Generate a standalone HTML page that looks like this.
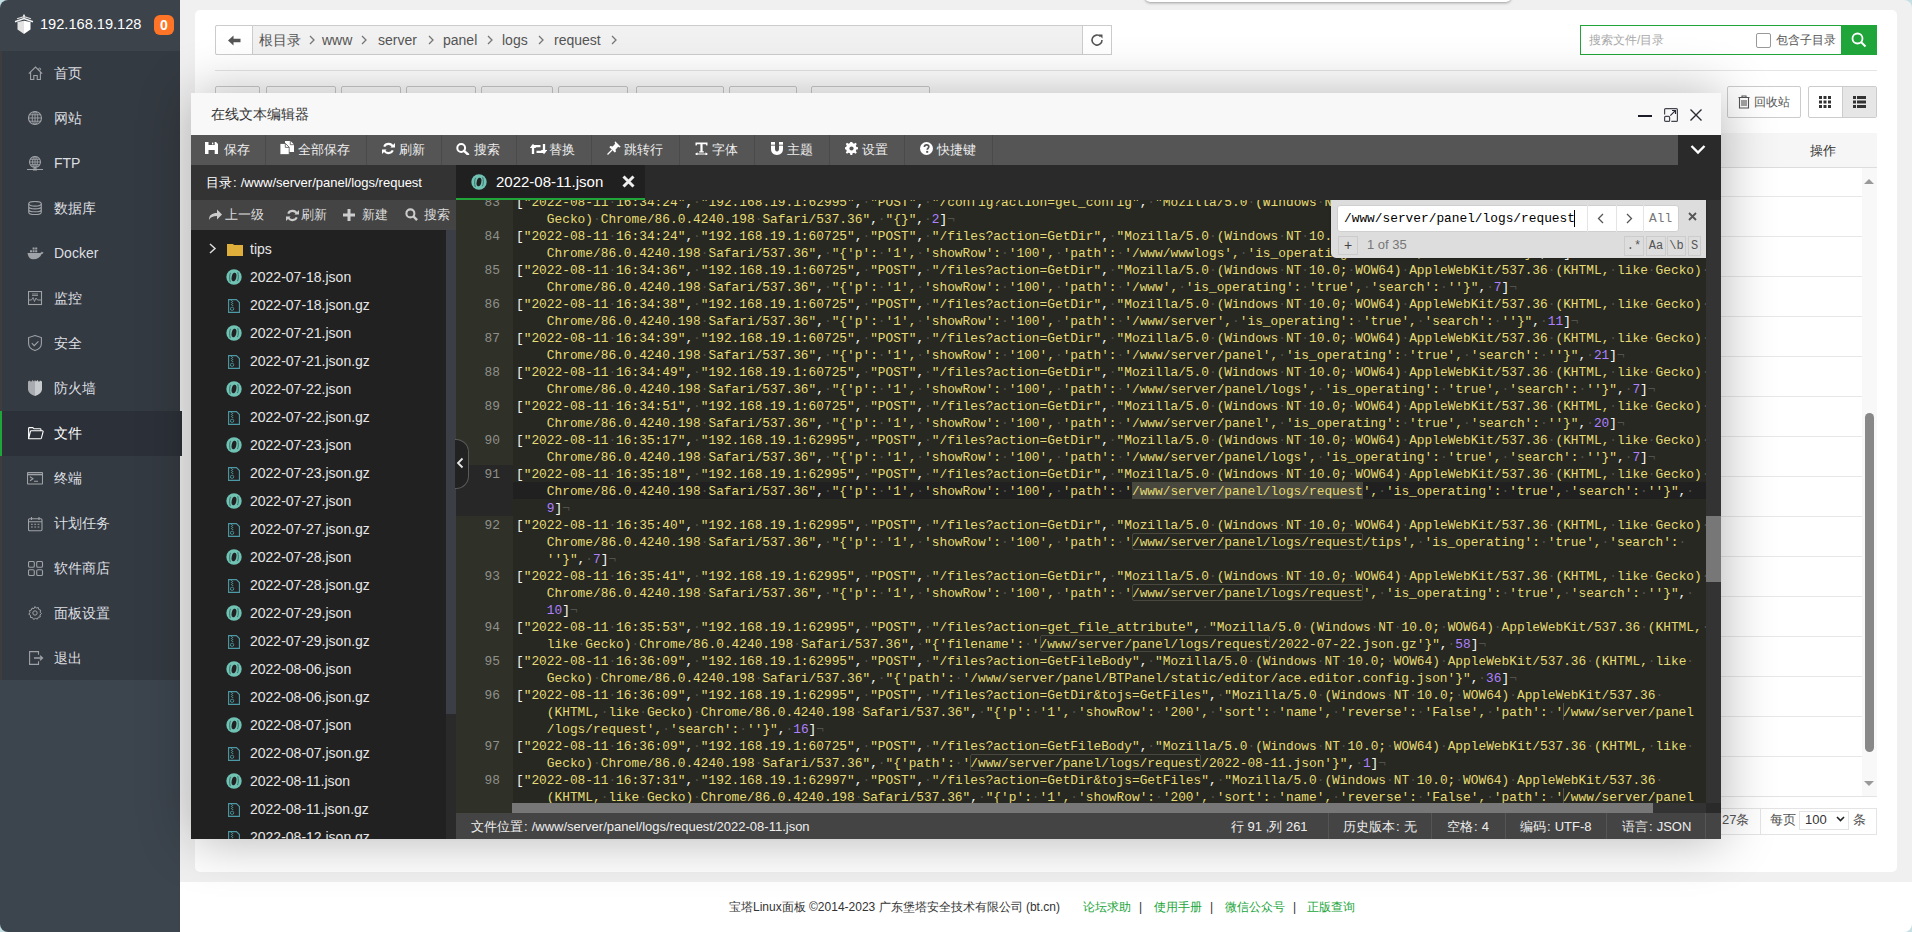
<!DOCTYPE html><html><head><meta charset="utf-8"><style>
*{box-sizing:border-box}
body{margin:0;width:1912px;height:932px;overflow:hidden;background:#f0f0f0;font-family:"Liberation Sans",sans-serif;position:relative;color:#333}
.a{position:absolute}
svg{display:block}
/* sidebar */
#sb{left:0;top:0;width:180px;height:932px;background:#3c444d}
#sbh{left:0;top:0;width:180px;height:51px;background:#3c434b}
#menu{left:0;top:51px;width:180px;height:629px;background:#343a41;border-left:2px solid #3d3d3d}
.mi{position:absolute;left:0;width:180px;height:45px}
.mi .t{position:absolute;left:52px;top:13px;font-size:14px;line-height:18px;color:#dcdfe2;white-space:nowrap}
.mi svg{position:absolute}
.mi.on{background:#2c3038}
.mi.on:before{content:"";position:absolute;left:-2px;top:0;width:2px;height:45px;background:#20a53a}
.mi.on .t{color:#fff}
/* main */
#panel{left:195px;top:10px;width:1702px;height:862px;background:#fff;border-radius:5px}
#foot{left:180px;top:882px;width:1732px;height:50px;background:#fff;font-size:12px;line-height:16px;color:#555;text-align:center;padding-top:18px;padding-left:0}
#foot a{color:#20a53a;text-decoration:none}
.crumb{left:215px;top:25px;width:897px;height:30px;border:1px solid #ccc;background:#f1f1f1;border-radius:2px}
.pbtn{top:86px;height:32px;border:1px solid #ccc;border-radius:2px;background:#fff}
/* dialog */
#dlg{left:191px;top:93px;width:1530px;height:746px;background:#2a2a2a;box-shadow:1px 1px 50px rgba(0,0,0,.3)}
#dtitle{left:0;top:0;width:1530px;height:42px;background:#f8f8f8;font-size:14px;line-height:42px;padding-left:20px;color:#333}
#tb{left:0;top:42px;width:1487px;height:30px;background:#555}
.tbi{position:absolute;top:0;height:30px;border-right:1px solid #4a4a4a;color:#eee;font-size:13px;line-height:30px;white-space:nowrap}
.tbi svg{position:absolute;top:8px}
.tbi span{position:absolute;top:0}
#dirh{left:0;top:72px;width:265px;height:35px;background:#333;color:#fff;font-size:13px;line-height:35px;padding-left:15px;white-space:nowrap}
#dirt{left:0;top:107px;width:265px;height:30px;background:#444;color:#ddd;font-size:13px;line-height:30px;white-space:nowrap}
#tree{left:0;top:137px;width:255px;height:609px;background:#212121;overflow:hidden}
#treesb{left:255px;top:137px;width:10px;height:609px;background:#2a2a2a}
.fi{position:absolute;left:0;height:28px;width:255px;color:#e6e6e6;font-size:14px;line-height:28px;white-space:nowrap}
.fi span{position:absolute;left:59px;top:0}
.fi svg{position:absolute}
#tabs{left:265px;top:72px;width:1265px;height:35px;background:#2a2a2a}
#tab{left:0;top:0;width:189px;height:35px;background:#202020;border-bottom:2px solid #20a53a;color:#fff;font-size:15px;line-height:34px;white-space:nowrap}
#ed{left:265px;top:107px;width:1265px;height:613px;background:#272822;overflow:hidden}
#gut{left:0;top:0;width:57px;height:613px;background:#2f3129}
.ln{position:absolute;left:0;width:57px;height:17px;text-align:right;padding-right:13px;color:#8f908a;font-family:"Liberation Mono",monospace;font-size:12.83px;line-height:17px}
.row{position:absolute;left:61px;height:17px;white-space:pre;font-family:"Liberation Mono",monospace;font-size:12.83px;line-height:17px;color:#f8f8f2}
.s{color:#e6db74}.n{color:#ae81ff}.i{color:#52524d}
#status{left:265px;top:720px;width:1265px;height:26px;background:#444;color:#eee;font-size:13px;line-height:28px;white-space:nowrap}
.st{position:absolute;top:0;height:26px;border-left:1px solid #555}
</style></head><body><div class="a" id="sb"></div><div class="a" id="sbh"><svg class="a" style="left:14px;top:14px" width="20" height="21" viewBox="0 0 20 21"><path d="M3.5 8L10 6.8V20L3.5 15.5Z" fill="#e2e2e2"/><path d="M10 6.8L16.5 8V15.5L10 20Z" fill="#fff"/><path d="M1 7.8L10 4.6L19 7.8" fill="none" stroke="#f2f2f2" stroke-width="1.5"/><path d="M3 4.8L10 2.6L17 4.8" fill="none" stroke="#d8d8d8" stroke-width="1.2"/><rect x="9" y="0.6" width="2" height="3" fill="#ddd"/></svg><div class="a" style="left:40px;top:15px;font-size:14.6px;line-height:18px;color:#fff;white-space:nowrap">192.168.19.128</div><div class="a" style="left:154px;top:15px;width:20px;height:20px;background:#ff7426;border-radius:6px;color:#fff;font-size:14px;font-weight:bold;line-height:20px;text-align:center">0</div></div><div class="a" id="menu"><div class="mi" style="top:0px"><svg style="left:26px;top:15px" width="16" height="15" viewBox="0 0 16 15" ><path d="M0.8 7.6L7.5 1L14.2 7.6M2.6 6V13.5H5.8V9.5H9.2V13.5H12.4V6" fill="none" stroke="#9fa3a8" stroke-width="1.1"/><circle cx="11.6" cy="3.2" r="1.1" fill="none" stroke="#9fa3a8" stroke-width="0.9"/></svg><div class="t">首页</div></div><div class="mi" style="top:45px"><svg style="left:26px;top:15px" width="15" height="15" viewBox="0 0 15 15" ><circle cx="7" cy="7" r="6.5" fill="none" stroke="#9fa3a8" stroke-width="1.1"/><ellipse cx="7" cy="7" rx="2.8" ry="6.5" fill="none" stroke="#9fa3a8" stroke-width="0.9"/><path d="M0.5 7H13.5M1.5 3.8H12.5M1.5 10.2H12.5M7 0.5V13.5" stroke="#9fa3a8" stroke-width="0.9"/></svg><div class="t">网站</div></div><div class="mi" style="top:90px"><svg style="left:25px;top:15px" width="17" height="15" viewBox="0 0 17 15" ><circle cx="8" cy="6" r="5.5" fill="none" stroke="#9fa3a8" stroke-width="1.1"/><ellipse cx="8" cy="6" rx="2.4" ry="5.5" fill="none" stroke="#9fa3a8" stroke-width="0.9"/><path d="M2.5 6H13.5M3.3 3.3H12.7M3.3 8.7H12.7M8 0.5V11.5" stroke="#9fa3a8" stroke-width="0.9"/><path d="M0 13.5H16M8 11.5V13.5" stroke="#9fa3a8" stroke-width="1.2"/><rect x="6" y="12.5" width="4" height="2" fill="#9fa3a8"/></svg><div class="t">FTP</div></div><div class="mi" style="top:135px"><svg style="left:26px;top:15px" width="15" height="15" viewBox="0 0 15 15" ><ellipse cx="7" cy="2.8" rx="6.3" ry="2.3" fill="none" stroke="#9fa3a8" stroke-width="1.1"/><path d="M0.7 2.8V11.2C0.7 12.5 3.5 13.5 7 13.5S13.3 12.5 13.3 11.2V2.8M0.7 5.6C0.7 6.9 3.5 7.9 7 7.9S13.3 6.9 13.3 5.6M0.7 8.4C0.7 9.7 3.5 10.7 7 10.7S13.3 9.7 13.3 8.4" fill="none" stroke="#9fa3a8" stroke-width="1.1"/></svg><div class="t">数据库</div></div><div class="mi" style="top:180px"><svg style="left:25px;top:16px" width="17" height="13" viewBox="0 0 17 13" ><path d="M0.5 6H13C13.8 6 14.6 5.4 14.9 4.6C15.4 5.3 16 5.6 16.6 5.5C16 6.8 15.2 7 14.6 7C13.4 10.2 10.6 12.3 6.3 12.3C3 12.3 1 10 0.5 6Z" fill="#9fa3a8"/><path d="M3 3.2h2v2H3zM5.6 3.2h2v2h-2zM8.2 3.2h2v2h-2zM5.6 0.6h2v2h-2zM8.2 0.6h2v2h-2z" fill="#9fa3a8"/></svg><div class="t">Docker</div></div><div class="mi" style="top:225px"><svg style="left:26px;top:15px" width="15" height="15" viewBox="0 0 15 15" ><rect x="0.5" y="0.5" width="13" height="13" fill="none" stroke="#9fa3a8" stroke-width="1.1"/><path d="M1 9L3.5 9L5 6.5L6.5 10.5L8 7L9.5 9L13 9" fill="none" stroke="#9fa3a8" stroke-width="0.9"/><path d="M4 3H10M4 4.5H10" stroke="#9fa3a8" stroke-width="0.8"/></svg><div class="t">监控</div></div><div class="mi" style="top:270px"><svg style="left:26px;top:14px" width="15" height="17" viewBox="0 0 15 17" ><path d="M7 0.6L13.4 2.6V8.5C13.4 12 10.5 14.5 7 15.6C3.5 14.5 0.6 12 0.6 8.5V2.6Z" fill="none" stroke="#9fa3a8" stroke-width="1.1"/><path d="M3.8 8.2L6.2 10.6L10.4 6.3" fill="none" stroke="#9fa3a8" stroke-width="1.1"/></svg><div class="t">安全</div></div><div class="mi" style="top:315px"><svg style="left:26px;top:14px" width="15" height="17" viewBox="0 0 15 17" ><path d="M0 1.5L2 0.5L3 2L4.5 0L6 1.5L7 0V16C3.5 15 0 12.5 0 9Z" fill="#a8acb0"/><path d="M7 0L8 1.5L9.5 0L11 2L12 0.5L14 1.5V9C14 12.5 10.5 15 7 16Z" fill="#c8cbce"/></svg><div class="t">防火墙</div></div><div class="mi on" style="top:360px"><svg style="left:26px;top:16px" width="16" height="13" viewBox="0 0 16 13" ><path d="M0.6 11.6V1.4C0.6 0.9 0.9 0.6 1.4 0.6H4.8L6 1.8H12.2C12.6 1.8 12.9 2.1 12.9 2.5V3.8M0.6 11.6L2.4 4.5C2.5 4.1 2.8 3.8 3.2 3.8H14.4C14.9 3.8 15.2 4.2 15.1 4.6L13.4 11.2C13.3 11.5 13 11.7 12.6 11.7H0.8Z" fill="none" stroke="#fff" stroke-width="1.1"/></svg><div class="t">文件</div></div><div class="mi" style="top:405px"><svg style="left:25px;top:16px" width="16" height="13" viewBox="0 0 16 13" ><rect x="0.5" y="0.5" width="15" height="11.5" rx="0.8" fill="none" stroke="#9fa3a8" stroke-width="1.1"/><path d="M0.5 2.5H15.5" stroke="#9fa3a8" stroke-width="1.6"/><path d="M3 4.8L6 6.8L3 8.8M7 9.3H11" fill="none" stroke="#9fa3a8" stroke-width="1.1"/></svg><div class="t">终端</div></div><div class="mi" style="top:450px"><svg style="left:26px;top:16px" width="15" height="15" viewBox="0 0 15 15" ><rect x="0.5" y="1.8" width="13.5" height="12" rx="1.2" fill="none" stroke="#9fa3a8" stroke-width="1.1"/><path d="M0.5 4.8H14M3.5 0V3M11 0V3" stroke="#9fa3a8" stroke-width="1.1"/><path d="M3 7.3H4.8M6.3 7.3H8.1M9.6 7.3H11.4M3 10H4.8M6.3 10H8.1M9.6 10H11.4" stroke="#9fa3a8" stroke-width="1"/></svg><div class="t">计划任务</div></div><div class="mi" style="top:495px"><svg style="left:26px;top:15px" width="16" height="16" viewBox="0 0 16 16" ><rect x="0.5" y="0.5" width="5.8" height="5.8" rx="1.3" fill="none" stroke="#9fa3a8" stroke-width="1.1"/><rect x="8.7" y="0.5" width="5.8" height="5.8" rx="1.3" fill="none" stroke="#9fa3a8" stroke-width="1.1"/><rect x="0.5" y="8.7" width="5.8" height="5.8" rx="1.3" fill="none" stroke="#9fa3a8" stroke-width="1.1"/><rect x="8.7" y="8.7" width="5.8" height="5.8" rx="1.3" fill="none" stroke="#9fa3a8" stroke-width="1.1"/></svg><div class="t">软件商店</div></div><div class="mi" style="top:540px"><svg style="left:26px;top:15px" width="15" height="15" viewBox="0 0 15 15" ><circle cx="7" cy="7" r="2.2" fill="none" stroke="#9fa3a8" stroke-width="1"/><path d="M7 0.5L8.3 2.1L10.3 1.5L10.8 3.5L12.7 4.2L12.1 6.2L13.5 7.6L11.9 8.9L12.3 10.9L10.3 11.2L9.4 13.1L7.5 12.4L5.6 13.4L4.5 11.6L2.5 11.5L2.6 9.4L0.8 8.3L2 6.6L1.4 4.6L3.4 4.1L4 2.1L6 2.6Z" fill="none" stroke="#9fa3a8" stroke-width="1" stroke-linejoin="round"/></svg><div class="t">面板设置</div></div><div class="mi" style="top:585px"><svg style="left:27px;top:15px" width="15" height="15" viewBox="0 0 15 15" ><path d="M9.5 3.8V0.6H0.6V13.4H9.5V10.2" fill="none" stroke="#9fa3a8" stroke-width="1.1"/><path d="M5 7H13.5M11 4.6L13.5 7L11 9.4" fill="none" stroke="#9fa3a8" stroke-width="1.3"/></svg><div class="t">退出</div></div></div><div class="a" id="panel"></div><div class="a crumb"></div><div class="a" style="left:215px;top:25px;width:38px;height:30px;border:1px solid #ccc;background:#fff;border-radius:2px 0 0 2px"></div><svg class="a" style="left:228px;top:35px" width="13" height="11" viewBox="0 0 13 11"><path d="M0 5.5L5.5 0.5V3.8H12.5V7.2H5.5V10.5Z" fill="#555"/></svg><div class="a" style="left:259px;top:32px;font-size:14px;line-height:16px;color:#555;white-space:nowrap">根目录</div><div class="a" style="left:322px;top:32px;font-size:14px;line-height:16px;color:#555;white-space:nowrap">www</div><div class="a" style="left:378px;top:32px;font-size:14px;line-height:16px;color:#555;white-space:nowrap">server</div><div class="a" style="left:443px;top:32px;font-size:14px;line-height:16px;color:#555;white-space:nowrap">panel</div><div class="a" style="left:502px;top:32px;font-size:14px;line-height:16px;color:#555;white-space:nowrap">logs</div><div class="a" style="left:554px;top:32px;font-size:14px;line-height:16px;color:#555;white-space:nowrap">request</div><svg class="a" style="left:309px;top:35px" width="6" height="10" viewBox="0 0 6 10"><path d="M1 1L5 5L1 9" fill="none" stroke="#777" stroke-width="1.3"/></svg><svg class="a" style="left:361px;top:35px" width="6" height="10" viewBox="0 0 6 10"><path d="M1 1L5 5L1 9" fill="none" stroke="#777" stroke-width="1.3"/></svg><svg class="a" style="left:428px;top:35px" width="6" height="10" viewBox="0 0 6 10"><path d="M1 1L5 5L1 9" fill="none" stroke="#777" stroke-width="1.3"/></svg><svg class="a" style="left:487px;top:35px" width="6" height="10" viewBox="0 0 6 10"><path d="M1 1L5 5L1 9" fill="none" stroke="#777" stroke-width="1.3"/></svg><svg class="a" style="left:538px;top:35px" width="6" height="10" viewBox="0 0 6 10"><path d="M1 1L5 5L1 9" fill="none" stroke="#777" stroke-width="1.3"/></svg><svg class="a" style="left:611px;top:35px" width="6" height="10" viewBox="0 0 6 10"><path d="M1 1L5 5L1 9" fill="none" stroke="#777" stroke-width="1.3"/></svg><div class="a" style="left:1082px;top:25px;width:30px;height:30px;border:1px solid #ccc;background:#fff"></div><svg class="a" style="left:1089px;top:32px" width="16" height="16" viewBox="0 0 16 16"><path d="M13 8A5 5 0 1 1 11.5 4.5" fill="none" stroke="#555" stroke-width="1.6"/><path d="M9.5 2.5L13.5 2.5L13.5 6.5Z" fill="#555"/></svg><div class="a" style="left:1580px;top:25px;width:262px;height:30px;border:1px solid #20a53a;background:#fff"></div><div class="a" style="left:1589px;top:32px;font-size:12px;line-height:16px;color:#aaa;white-space:nowrap">搜索文件/目录</div><div class="a" style="left:1756px;top:33px;width:15px;height:15px;border:1px solid #999;border-radius:2px;background:#fff"></div><div class="a" style="left:1776px;top:32px;font-size:12px;line-height:16px;color:#555;white-space:nowrap">包含子目录</div><div class="a" style="left:1841px;top:25px;width:36px;height:30px;background:#20a53a"></div><svg class="a" style="left:1851px;top:32px" width="16" height="16" viewBox="0 0 16 16"><circle cx="6.5" cy="6.5" r="5" fill="none" stroke="#fff" stroke-width="1.8"/><path d="M10 10L14.5 14.5" stroke="#fff" stroke-width="2"/></svg><div class="a" style="left:215px;top:70px;width:1662px;height:1px;background:#e4e4e4"></div><div class="a pbtn" style="left:215px;width:45px"></div><div class="a pbtn" style="left:266px;width:70px"></div><div class="a pbtn" style="left:341px;width:60px"></div><div class="a pbtn" style="left:406px;width:70px"></div><div class="a pbtn" style="left:481px;width:72px"></div><div class="a pbtn" style="left:558px;width:70px"></div><div class="a pbtn" style="left:636px;width:88px"></div><div class="a pbtn" style="left:729px;width:68px"></div><div class="a pbtn" style="left:811px;width:119px"></div><div class="a" style="left:803px;top:93px;width:1px;height:10px;background:#ddd"></div><div class="a pbtn" style="left:1727px;width:74px;top:86px;height:32px"></div><svg class="a" style="left:1738px;top:95px" width="12" height="14" viewBox="0 0 12 14"><path d="M0.5 2.5H11.5M4 2.5V1H8V2.5M1.5 3V13H10.5V3M4 5V11M6 5V11M8 5V11" fill="none" stroke="#555" stroke-width="1.1"/></svg><div class="a" style="left:1754px;top:94px;font-size:12px;line-height:16px;color:#555;white-space:nowrap">回收站</div><div class="a pbtn" style="left:1808px;width:69px;top:86px;height:32px"></div><div class="a" style="left:1842px;top:87px;width:34px;height:30px;background:#e6e6e6;border-left:1px solid #ccc"></div><svg class="a" style="left:1819px;top:96px" width="12" height="12" viewBox="0 0 12 12"><path d="M0 0h3v3H0zM4.5 0h3v3h-3zM9 0h3v3H9zM0 4.5h3v3H0zM4.5 4.5h3v3h-3zM9 4.5h3v3H9zM0 9h3v3H0zM4.5 9h3v3h-3zM9 9h3v3H9z" fill="#333"/></svg><svg class="a" style="left:1853px;top:96px" width="13" height="12" viewBox="0 0 13 12"><path d="M0 0h3v3H0zM4 0h9v3H4zM0 4.5h3v3H0zM4 4.5h9v3H4zM0 9h3v3H0zM4 9h9v3H4z" fill="#333"/></svg><div class="a" style="left:1721px;top:133px;width:156px;height:35px;background:#f6f6f6;border-bottom:1px solid #ddd"></div><div class="a" style="left:1810px;top:143px;font-size:13px;line-height:16px;color:#333">操作</div><div class="a" style="left:1721px;top:196px;width:141px;height:1px;background:#e8e8e8"></div><div class="a" style="left:1721px;top:236px;width:141px;height:1px;background:#e8e8e8"></div><div class="a" style="left:1721px;top:276px;width:141px;height:1px;background:#e8e8e8"></div><div class="a" style="left:1721px;top:316px;width:141px;height:1px;background:#e8e8e8"></div><div class="a" style="left:1721px;top:356px;width:141px;height:1px;background:#e8e8e8"></div><div class="a" style="left:1721px;top:396px;width:141px;height:1px;background:#e8e8e8"></div><div class="a" style="left:1721px;top:436px;width:141px;height:1px;background:#e8e8e8"></div><div class="a" style="left:1721px;top:476px;width:141px;height:1px;background:#e8e8e8"></div><div class="a" style="left:1721px;top:516px;width:141px;height:1px;background:#e8e8e8"></div><div class="a" style="left:1721px;top:556px;width:141px;height:1px;background:#e8e8e8"></div><div class="a" style="left:1721px;top:596px;width:141px;height:1px;background:#e8e8e8"></div><div class="a" style="left:1721px;top:636px;width:141px;height:1px;background:#e8e8e8"></div><div class="a" style="left:1721px;top:676px;width:141px;height:1px;background:#e8e8e8"></div><div class="a" style="left:1721px;top:716px;width:141px;height:1px;background:#e8e8e8"></div><div class="a" style="left:1721px;top:756px;width:141px;height:1px;background:#e8e8e8"></div><div class="a" style="left:1721px;top:796px;width:141px;height:1px;background:#e8e8e8"></div><div class="a" style="left:1862px;top:168px;width:15px;height:628px;background:#f8f8f8"></div><svg class="a" style="left:1864px;top:178px" width="10" height="6" viewBox="0 0 10 6"><path d="M0 6L5 1L10 6Z" fill="#999"/></svg><svg class="a" style="left:1864px;top:781px" width="10" height="6" viewBox="0 0 10 6"><path d="M0 0L5 5L10 0Z" fill="#999"/></svg><div class="a" style="left:1865px;top:413px;width:9px;height:339px;background:#888;border-radius:5px"></div><div class="a" style="left:1721px;top:796px;width:156px;height:1px;background:#e4e4e4"></div><div class="a" style="left:1721px;top:808px;width:156px;height:27px;border:1px solid #e4e4e4;border-left:none;background:#fff"></div><div class="a" style="left:1760px;top:808px;width:1px;height:27px;background:#e4e4e4"></div><div class="a" style="left:1722px;top:812px;font-size:13px;line-height:16px;color:#555;white-space:nowrap">27条</div><div class="a" style="left:1770px;top:812px;font-size:13px;line-height:16px;color:#555;white-space:nowrap">每页</div><div class="a" style="left:1799px;top:811px;width:50px;height:19px;border:1px solid #e4e4e4;background:#fff"></div><div class="a" style="left:1805px;top:812px;font-size:13px;line-height:16px;color:#333">100</div><svg class="a" style="left:1836px;top:816px" width="9" height="6" viewBox="0 0 9 6"><path d="M1 1L4.5 4.5L8 1" fill="none" stroke="#222" stroke-width="1.6"/></svg><div class="a" style="left:1853px;top:812px;font-size:13px;line-height:16px;color:#555">条</div><div class="a" style="left:180px;top:882px;width:1732px;height:50px;background:#fff"></div><div class="a" style="left:729px;top:899px;font-size:12px;line-height:16px;color:#333;white-space:nowrap">宝塔Linux面板 ©2014-2023 广东堡塔安全技术有限公司 (bt.cn)</div><div class="a" style="left:1083px;top:899px;font-size:12px;line-height:16px;color:#20a53a;white-space:nowrap">论坛求助</div><div class="a" style="left:1139px;top:899px;font-size:12px;line-height:16px;color:#333;white-space:nowrap">|</div><div class="a" style="left:1154px;top:899px;font-size:12px;line-height:16px;color:#20a53a;white-space:nowrap">使用手册</div><div class="a" style="left:1210px;top:899px;font-size:12px;line-height:16px;color:#333;white-space:nowrap">|</div><div class="a" style="left:1225px;top:899px;font-size:12px;line-height:16px;color:#20a53a;white-space:nowrap">微信公众号</div><div class="a" style="left:1293px;top:899px;font-size:12px;line-height:16px;color:#333;white-space:nowrap">|</div><div class="a" style="left:1307px;top:899px;font-size:12px;line-height:16px;color:#20a53a;white-space:nowrap">正版查询</div><div class="a" style="left:1145px;top:-10px;width:366px;height:12px;background:#fff;border-radius:5px;box-shadow:0 1px 3px rgba(0,0,0,.35)"></div><div class="a" id="dlg"><div class="a" id="dtitle">在线文本编辑器</div><svg class="a" style="left:1447px;top:22px" width="14" height="2"><rect width="14" height="2" fill="#1c1c28"/></svg><svg class="a" style="left:1473px;top:15px" width="14" height="14" viewBox="0 0 14 14"><path d="M0.6 6.5V1.6C0.6 1 1 0.6 1.6 0.6H12.4C13 0.6 13.4 1 13.4 1.6V12.4C13.4 13 13 13.4 12.4 13.4H7.3" fill="none" stroke="#45454d" stroke-width="1.2"/><rect x="0.6" y="8.4" width="5" height="5" rx="1" fill="none" stroke="#45454d" stroke-width="1.2"/><path d="M6.3 7.7L11.3 2.7M8 2.5H11.5V6" fill="none" stroke="#2a2a35" stroke-width="1.2"/></svg><svg class="a" style="left:1499px;top:16px" width="12" height="12" viewBox="0 0 12 12"><path d="M0.5 0.5L11.5 11.5M11.5 0.5L0.5 11.5" stroke="#2a2a33" stroke-width="1.4"/></svg><div class="a" id="tb"><div class="tbi" style="left:0px;width:75px"><svg style="left:14px;top:7px" width="13" height="12" viewBox="0 0 13 12" ><path d="M0 0H3.5V3H9.7V0H11L13 2V12H9.7V8H3.5V12H0Z" fill="#fff"/><rect x="7" y="0.6" width="1.3" height="1.8" fill="#fff"/></svg><span style="left:33px">保存</span></div><div class="tbi" style="left:74px;width:102px"><svg style="left:15px;top:6px" width="14" height="14" viewBox="0 0 14 14" ><path d="M5 0H10.5L14 3.5V11H5Z" fill="#fff"/><path d="M10.3 0V3.7H14" fill="none" stroke="#555" stroke-width="0.8"/><path d="M0 2.5H5.5L9.2 6.2V13.6H0Z" fill="#fff" stroke="#555" stroke-width="0.8"/><path d="M5.3 2.5V6.4H9.2" fill="none" stroke="#555" stroke-width="0.8"/></svg><span style="left:33px">全部保存</span></div><div class="tbi" style="left:175px;width:76px"><svg style="left:16px;top:7px" width="13" height="13" viewBox="0 0 13 13" ><path d="M11 5A4.8 4.8 0 0 0 2.2 4.6" fill="none" stroke="#fff" stroke-width="2.1"/><path d="M8.4 5.6H13V1Z" fill="#fff"/><path d="M2 8A4.8 4.8 0 0 0 10.8 8.4" fill="none" stroke="#fff" stroke-width="2.1"/><path d="M4.6 7.4H0V12Z" fill="#fff"/></svg><span style="left:33px">刷新</span></div><div class="tbi" style="left:250px;width:76px"><svg style="left:15px;top:8px" width="14" height="12" viewBox="0 0 14 12" ><circle cx="5.2" cy="5" r="3.9" fill="none" stroke="#fff" stroke-width="2"/><path d="M8 7.8L12 11.5" stroke="#fff" stroke-width="2.4" stroke-linecap="round"/></svg><span style="left:33px">搜索</span></div><div class="tbi" style="left:325px;width:76px"><svg style="left:14px;top:8px" width="17" height="12" viewBox="0 0 17 12" ><path d="M3 11V3.2H10.5" fill="none" stroke="#fff" stroke-width="2.3"/><path d="M-0.2 5L3 0.8L6.2 5Z" fill="#fff"/><path d="M14 1V8.8H6.5" fill="none" stroke="#fff" stroke-width="2.3"/><path d="M10.8 7L14 11.2L17.2 7Z" fill="#fff"/></svg><span style="left:33px">替换</span></div><div class="tbi" style="left:400px;width:89px"><svg style="left:16px;top:6px" width="14" height="14" viewBox="0 0 14 14" ><path d="M8.2 0.3L13.7 5.8L12.6 6.4L11.2 5.8L8.6 8.4L8.9 10.7L7.7 11.6L2.4 6.3L3.3 5.1L5.6 5.4L8.2 2.8L7.6 1.4Z" fill="#fff"/><path d="M5 9L0.5 13.5" stroke="#fff" stroke-width="1.3"/></svg><span style="left:33px">跳转行</span></div><div class="tbi" style="left:488px;width:76px"><svg style="left:16px;top:7px" width="13" height="13" viewBox="0 0 13 13" ><path d="M0.5 0.5H12.5V3.5H11.3L10.9 2.2H7.6V9.2H8.8V10.4H4.2V9.2H5.4V2.2H2.1L1.7 3.5H0.5Z" fill="#fff"/><path d="M1 12H12" stroke="#fff" stroke-width="1"/><path d="M0 12L2.5 10.3V13.7Z M13 12L10.5 10.3V13.7Z" fill="#fff"/></svg><span style="left:33px">字体</span></div><div class="tbi" style="left:563px;width:76px"><svg style="left:17px;top:7px" width="12" height="13" viewBox="0 0 12 13" ><path d="M0 0H4V6.8C4 8.6 4.8 9.4 6 9.4S8 8.6 8 6.8V0H12V6.8C12 10.8 9.6 13 6 13S0 10.8 0 6.8Z" fill="#fff"/><path d="M0 3.2H4M8 3.2H12" stroke="#555" stroke-width="0.9"/></svg><span style="left:33px">主题</span></div><div class="tbi" style="left:638px;width:76px"><svg style="left:16px;top:7px" width="13" height="13" viewBox="0 0 13 13" ><path d="M5.5 0H7.5L7.9 1.9L9.5 2.6L11.1 1.5L12.5 2.9L11.4 4.5L12.1 6.1L14 6.5V8.5L12.1 8.9L11.4 10.5L12.5 12.1L11.1 13.5L9.5 12.4L7.9 13.1L7.5 15H5.5L5.1 13.1L3.5 12.4L1.9 13.5L0.5 12.1L1.6 10.5L0.9 8.9L-1 8.5V6.5L0.9 6.1L1.6 4.5L0.5 2.9L1.9 1.5L3.5 2.6L5.1 1.9Z" fill="#fff" transform="translate(0.3 -0.7) scale(0.92)"/><circle cx="6.5" cy="6.5" r="2.1" fill="#555"/></svg><span style="left:33px">设置</span></div><div class="tbi" style="left:713px;width:89px"><svg style="left:16px;top:7px" width="13" height="13" viewBox="0 0 13 13" ><circle cx="6.5" cy="6.5" r="6.5" fill="#fff"/><path d="M4.4 5C4.4 3.6 5.3 2.9 6.6 2.9S8.8 3.7 8.8 4.8C8.8 6.2 7.2 6.4 7.2 7.8" fill="none" stroke="#555" stroke-width="1.7"/><rect x="6.2" y="8.9" width="2" height="1.9" fill="#555"/></svg><span style="left:33px">快捷键</span></div></div><svg class="a" style="left:1499px;top:51px" width="16" height="11" viewBox="0 0 16 11"><path d="M1.5 2L8 8.5L14.5 2" fill="none" stroke="#fff" stroke-width="2.4"/></svg><div class="a" id="dirh">目录<span style="margin-left:1px;margin-right:4px">:</span>/www/server/panel/logs/request</div><div class="a" id="dirt"><svg class="a" style="left:18px;top:9px" width="13" height="11" viewBox="0 0 13 11"><path d="M0 11C0 6 3 4 8 4V0.5L13 5.5L8 10.5V7C4 7 1.5 8 0 11Z" fill="#ccc"/></svg><span class="a" style="left:34px;top:0">上一级</span><svg class="a" style="left:95px;top:9px" width="13" height="13" viewBox="0 0 13 13"><path d="M11 5A4.8 4.8 0 0 0 2.2 4.6" fill="none" stroke="#ccc" stroke-width="2.1"/><path d="M8.4 5.6H13V1Z" fill="#ccc"/><path d="M2 8A4.8 4.8 0 0 0 10.8 8.4" fill="none" stroke="#ccc" stroke-width="2.1"/><path d="M4.6 7.4H0V12Z" fill="#ccc"/></svg><span class="a" style="left:110px;top:0">刷新</span><svg class="a" style="left:152px;top:9px" width="12" height="12" viewBox="0 0 12 12"><path d="M4.5 0H7.5V4.5H12V7.5H7.5V12H4.5V7.5H0V4.5H4.5Z" fill="#ccc"/></svg><span class="a" style="left:171px;top:0">新建</span><svg class="a" style="left:214px;top:8px" width="13" height="13" viewBox="0 0 14 14"><circle cx="5.8" cy="5.8" r="4.3" fill="none" stroke="#ccc" stroke-width="2.2"/><path d="M9 9L13 13" stroke="#ccc" stroke-width="2.6"/></svg><span class="a" style="left:233px;top:0">搜索</span></div><div class="a" id="tree"><div class="fi" style="top:5px"><svg width="8" height="11" viewBox="0 0 8 11" style="left:18px;top:8px"><path d="M1 1L6 5.5L1 10" fill="none" stroke="#ddd" stroke-width="1.5"/></svg><svg width="16" height="13" viewBox="0 0 16 13" style="left:36px;top:8px"><path d="M0 1H6L7 2H16V13H0Z" fill="#e0ae3a"/></svg><span>tips</span></div><div class="fi" style="top:33px"><svg width="16" height="16" viewBox="0 0 16 16" style="left:35px;top:6px"><circle cx="8" cy="8" r="7.7" fill="#70c2b3"/><ellipse cx="8" cy="8" rx="2.3" ry="4.3" transform="rotate(12 8 8)" fill="#212121"/><path d="M4.6 3.8C3.4 6 3.3 10 4.3 13" fill="none" stroke="#2b5f60" stroke-width="0.8"/><path d="M11.7 3.2C12.6 6 12.6 10 11.4 12.2" fill="none" stroke="#2b5f60" stroke-width="0.8"/></svg><span>2022-07-18.json</span></div><div class="fi" style="top:61px"><svg width="12" height="14" viewBox="0 0 12 14" style="left:37px;top:8px"><path d="M0.6 0.6H8.4L11.4 3.6V13.4H0.6Z" fill="none" stroke="#4d9aa6" stroke-width="1.1"/><path d="M2.9 1.6H4.1M4 2.6H5.2M2.9 3.6H4.1M4 4.6H5.2M2.9 5.6H4.1M4 6.6H5.2" stroke="#4d9aa6" stroke-width="0.9"/><rect x="2.5" y="8.3" width="3.2" height="3" rx="1.3" fill="none" stroke="#4d9aa6" stroke-width="0.9"/></svg><span>2022-07-18.json.gz</span></div><div class="fi" style="top:89px"><svg width="16" height="16" viewBox="0 0 16 16" style="left:35px;top:6px"><circle cx="8" cy="8" r="7.7" fill="#70c2b3"/><ellipse cx="8" cy="8" rx="2.3" ry="4.3" transform="rotate(12 8 8)" fill="#212121"/><path d="M4.6 3.8C3.4 6 3.3 10 4.3 13" fill="none" stroke="#2b5f60" stroke-width="0.8"/><path d="M11.7 3.2C12.6 6 12.6 10 11.4 12.2" fill="none" stroke="#2b5f60" stroke-width="0.8"/></svg><span>2022-07-21.json</span></div><div class="fi" style="top:117px"><svg width="12" height="14" viewBox="0 0 12 14" style="left:37px;top:8px"><path d="M0.6 0.6H8.4L11.4 3.6V13.4H0.6Z" fill="none" stroke="#4d9aa6" stroke-width="1.1"/><path d="M2.9 1.6H4.1M4 2.6H5.2M2.9 3.6H4.1M4 4.6H5.2M2.9 5.6H4.1M4 6.6H5.2" stroke="#4d9aa6" stroke-width="0.9"/><rect x="2.5" y="8.3" width="3.2" height="3" rx="1.3" fill="none" stroke="#4d9aa6" stroke-width="0.9"/></svg><span>2022-07-21.json.gz</span></div><div class="fi" style="top:145px"><svg width="16" height="16" viewBox="0 0 16 16" style="left:35px;top:6px"><circle cx="8" cy="8" r="7.7" fill="#70c2b3"/><ellipse cx="8" cy="8" rx="2.3" ry="4.3" transform="rotate(12 8 8)" fill="#212121"/><path d="M4.6 3.8C3.4 6 3.3 10 4.3 13" fill="none" stroke="#2b5f60" stroke-width="0.8"/><path d="M11.7 3.2C12.6 6 12.6 10 11.4 12.2" fill="none" stroke="#2b5f60" stroke-width="0.8"/></svg><span>2022-07-22.json</span></div><div class="fi" style="top:173px"><svg width="12" height="14" viewBox="0 0 12 14" style="left:37px;top:8px"><path d="M0.6 0.6H8.4L11.4 3.6V13.4H0.6Z" fill="none" stroke="#4d9aa6" stroke-width="1.1"/><path d="M2.9 1.6H4.1M4 2.6H5.2M2.9 3.6H4.1M4 4.6H5.2M2.9 5.6H4.1M4 6.6H5.2" stroke="#4d9aa6" stroke-width="0.9"/><rect x="2.5" y="8.3" width="3.2" height="3" rx="1.3" fill="none" stroke="#4d9aa6" stroke-width="0.9"/></svg><span>2022-07-22.json.gz</span></div><div class="fi" style="top:201px"><svg width="16" height="16" viewBox="0 0 16 16" style="left:35px;top:6px"><circle cx="8" cy="8" r="7.7" fill="#70c2b3"/><ellipse cx="8" cy="8" rx="2.3" ry="4.3" transform="rotate(12 8 8)" fill="#212121"/><path d="M4.6 3.8C3.4 6 3.3 10 4.3 13" fill="none" stroke="#2b5f60" stroke-width="0.8"/><path d="M11.7 3.2C12.6 6 12.6 10 11.4 12.2" fill="none" stroke="#2b5f60" stroke-width="0.8"/></svg><span>2022-07-23.json</span></div><div class="fi" style="top:229px"><svg width="12" height="14" viewBox="0 0 12 14" style="left:37px;top:8px"><path d="M0.6 0.6H8.4L11.4 3.6V13.4H0.6Z" fill="none" stroke="#4d9aa6" stroke-width="1.1"/><path d="M2.9 1.6H4.1M4 2.6H5.2M2.9 3.6H4.1M4 4.6H5.2M2.9 5.6H4.1M4 6.6H5.2" stroke="#4d9aa6" stroke-width="0.9"/><rect x="2.5" y="8.3" width="3.2" height="3" rx="1.3" fill="none" stroke="#4d9aa6" stroke-width="0.9"/></svg><span>2022-07-23.json.gz</span></div><div class="fi" style="top:257px"><svg width="16" height="16" viewBox="0 0 16 16" style="left:35px;top:6px"><circle cx="8" cy="8" r="7.7" fill="#70c2b3"/><ellipse cx="8" cy="8" rx="2.3" ry="4.3" transform="rotate(12 8 8)" fill="#212121"/><path d="M4.6 3.8C3.4 6 3.3 10 4.3 13" fill="none" stroke="#2b5f60" stroke-width="0.8"/><path d="M11.7 3.2C12.6 6 12.6 10 11.4 12.2" fill="none" stroke="#2b5f60" stroke-width="0.8"/></svg><span>2022-07-27.json</span></div><div class="fi" style="top:285px"><svg width="12" height="14" viewBox="0 0 12 14" style="left:37px;top:8px"><path d="M0.6 0.6H8.4L11.4 3.6V13.4H0.6Z" fill="none" stroke="#4d9aa6" stroke-width="1.1"/><path d="M2.9 1.6H4.1M4 2.6H5.2M2.9 3.6H4.1M4 4.6H5.2M2.9 5.6H4.1M4 6.6H5.2" stroke="#4d9aa6" stroke-width="0.9"/><rect x="2.5" y="8.3" width="3.2" height="3" rx="1.3" fill="none" stroke="#4d9aa6" stroke-width="0.9"/></svg><span>2022-07-27.json.gz</span></div><div class="fi" style="top:313px"><svg width="16" height="16" viewBox="0 0 16 16" style="left:35px;top:6px"><circle cx="8" cy="8" r="7.7" fill="#70c2b3"/><ellipse cx="8" cy="8" rx="2.3" ry="4.3" transform="rotate(12 8 8)" fill="#212121"/><path d="M4.6 3.8C3.4 6 3.3 10 4.3 13" fill="none" stroke="#2b5f60" stroke-width="0.8"/><path d="M11.7 3.2C12.6 6 12.6 10 11.4 12.2" fill="none" stroke="#2b5f60" stroke-width="0.8"/></svg><span>2022-07-28.json</span></div><div class="fi" style="top:341px"><svg width="12" height="14" viewBox="0 0 12 14" style="left:37px;top:8px"><path d="M0.6 0.6H8.4L11.4 3.6V13.4H0.6Z" fill="none" stroke="#4d9aa6" stroke-width="1.1"/><path d="M2.9 1.6H4.1M4 2.6H5.2M2.9 3.6H4.1M4 4.6H5.2M2.9 5.6H4.1M4 6.6H5.2" stroke="#4d9aa6" stroke-width="0.9"/><rect x="2.5" y="8.3" width="3.2" height="3" rx="1.3" fill="none" stroke="#4d9aa6" stroke-width="0.9"/></svg><span>2022-07-28.json.gz</span></div><div class="fi" style="top:369px"><svg width="16" height="16" viewBox="0 0 16 16" style="left:35px;top:6px"><circle cx="8" cy="8" r="7.7" fill="#70c2b3"/><ellipse cx="8" cy="8" rx="2.3" ry="4.3" transform="rotate(12 8 8)" fill="#212121"/><path d="M4.6 3.8C3.4 6 3.3 10 4.3 13" fill="none" stroke="#2b5f60" stroke-width="0.8"/><path d="M11.7 3.2C12.6 6 12.6 10 11.4 12.2" fill="none" stroke="#2b5f60" stroke-width="0.8"/></svg><span>2022-07-29.json</span></div><div class="fi" style="top:397px"><svg width="12" height="14" viewBox="0 0 12 14" style="left:37px;top:8px"><path d="M0.6 0.6H8.4L11.4 3.6V13.4H0.6Z" fill="none" stroke="#4d9aa6" stroke-width="1.1"/><path d="M2.9 1.6H4.1M4 2.6H5.2M2.9 3.6H4.1M4 4.6H5.2M2.9 5.6H4.1M4 6.6H5.2" stroke="#4d9aa6" stroke-width="0.9"/><rect x="2.5" y="8.3" width="3.2" height="3" rx="1.3" fill="none" stroke="#4d9aa6" stroke-width="0.9"/></svg><span>2022-07-29.json.gz</span></div><div class="fi" style="top:425px"><svg width="16" height="16" viewBox="0 0 16 16" style="left:35px;top:6px"><circle cx="8" cy="8" r="7.7" fill="#70c2b3"/><ellipse cx="8" cy="8" rx="2.3" ry="4.3" transform="rotate(12 8 8)" fill="#212121"/><path d="M4.6 3.8C3.4 6 3.3 10 4.3 13" fill="none" stroke="#2b5f60" stroke-width="0.8"/><path d="M11.7 3.2C12.6 6 12.6 10 11.4 12.2" fill="none" stroke="#2b5f60" stroke-width="0.8"/></svg><span>2022-08-06.json</span></div><div class="fi" style="top:453px"><svg width="12" height="14" viewBox="0 0 12 14" style="left:37px;top:8px"><path d="M0.6 0.6H8.4L11.4 3.6V13.4H0.6Z" fill="none" stroke="#4d9aa6" stroke-width="1.1"/><path d="M2.9 1.6H4.1M4 2.6H5.2M2.9 3.6H4.1M4 4.6H5.2M2.9 5.6H4.1M4 6.6H5.2" stroke="#4d9aa6" stroke-width="0.9"/><rect x="2.5" y="8.3" width="3.2" height="3" rx="1.3" fill="none" stroke="#4d9aa6" stroke-width="0.9"/></svg><span>2022-08-06.json.gz</span></div><div class="fi" style="top:481px"><svg width="16" height="16" viewBox="0 0 16 16" style="left:35px;top:6px"><circle cx="8" cy="8" r="7.7" fill="#70c2b3"/><ellipse cx="8" cy="8" rx="2.3" ry="4.3" transform="rotate(12 8 8)" fill="#212121"/><path d="M4.6 3.8C3.4 6 3.3 10 4.3 13" fill="none" stroke="#2b5f60" stroke-width="0.8"/><path d="M11.7 3.2C12.6 6 12.6 10 11.4 12.2" fill="none" stroke="#2b5f60" stroke-width="0.8"/></svg><span>2022-08-07.json</span></div><div class="fi" style="top:509px"><svg width="12" height="14" viewBox="0 0 12 14" style="left:37px;top:8px"><path d="M0.6 0.6H8.4L11.4 3.6V13.4H0.6Z" fill="none" stroke="#4d9aa6" stroke-width="1.1"/><path d="M2.9 1.6H4.1M4 2.6H5.2M2.9 3.6H4.1M4 4.6H5.2M2.9 5.6H4.1M4 6.6H5.2" stroke="#4d9aa6" stroke-width="0.9"/><rect x="2.5" y="8.3" width="3.2" height="3" rx="1.3" fill="none" stroke="#4d9aa6" stroke-width="0.9"/></svg><span>2022-08-07.json.gz</span></div><div class="fi" style="top:537px"><svg width="16" height="16" viewBox="0 0 16 16" style="left:35px;top:6px"><circle cx="8" cy="8" r="7.7" fill="#70c2b3"/><ellipse cx="8" cy="8" rx="2.3" ry="4.3" transform="rotate(12 8 8)" fill="#212121"/><path d="M4.6 3.8C3.4 6 3.3 10 4.3 13" fill="none" stroke="#2b5f60" stroke-width="0.8"/><path d="M11.7 3.2C12.6 6 12.6 10 11.4 12.2" fill="none" stroke="#2b5f60" stroke-width="0.8"/></svg><span>2022-08-11.json</span></div><div class="fi" style="top:565px"><svg width="12" height="14" viewBox="0 0 12 14" style="left:37px;top:8px"><path d="M0.6 0.6H8.4L11.4 3.6V13.4H0.6Z" fill="none" stroke="#4d9aa6" stroke-width="1.1"/><path d="M2.9 1.6H4.1M4 2.6H5.2M2.9 3.6H4.1M4 4.6H5.2M2.9 5.6H4.1M4 6.6H5.2" stroke="#4d9aa6" stroke-width="0.9"/><rect x="2.5" y="8.3" width="3.2" height="3" rx="1.3" fill="none" stroke="#4d9aa6" stroke-width="0.9"/></svg><span>2022-08-11.json.gz</span></div><div class="fi" style="top:593px"><svg width="12" height="14" viewBox="0 0 12 14" style="left:37px;top:8px"><path d="M0.6 0.6H8.4L11.4 3.6V13.4H0.6Z" fill="none" stroke="#4d9aa6" stroke-width="1.1"/><path d="M2.9 1.6H4.1M4 2.6H5.2M2.9 3.6H4.1M4 4.6H5.2M2.9 5.6H4.1M4 6.6H5.2" stroke="#4d9aa6" stroke-width="0.9"/><rect x="2.5" y="8.3" width="3.2" height="3" rx="1.3" fill="none" stroke="#4d9aa6" stroke-width="0.9"/></svg><span>2022-08-12.json.gz</span></div></div><div class="a" id="treesb"><div class="a" style="left:0;top:0;width:10px;height:484px;background:#3b3e45"></div></div><div class="a" id="tabs"><div class="a" id="tab"><svg width="16" height="16" viewBox="0 0 16 16" style="left:14.5px;top:9px;position:absolute"><circle cx="8" cy="8" r="7.7" fill="#70c2b3"/><ellipse cx="8" cy="8" rx="2.3" ry="4.3" transform="rotate(12 8 8)" fill="#212121"/><path d="M4.6 3.8C3.4 6 3.3 10 4.3 13" fill="none" stroke="#2b5f60" stroke-width="0.8"/><path d="M11.7 3.2C12.6 6 12.6 10 11.4 12.2" fill="none" stroke="#2b5f60" stroke-width="0.8"/></svg><span class="a" style="left:40px;top:0">2022-08-11.json</span><svg class="a" style="left:166px;top:10px" width="13" height="13" viewBox="0 0 13 13"><path d="M1.5 1.5L11.5 11.5M11.5 1.5L1.5 11.5" stroke="#eee" stroke-width="3"/></svg></div></div><div class="a" id="ed"><div class="a" id="gut"></div><div class="a" style="left:0;top:265px;width:57px;height:17px;background:#272727"></div><div class="a" style="left:57px;top:282px;width:1193px;height:17px;background:#202020"></div><div class="a" style="left:0;top:282px;width:57px;height:17px;background:#272727"></div><div class="a" style="left:0;top:299px;width:57px;height:17px;background:#272727"></div><div class="ln" style="top:-6px">83</div><div class="row" style="top:-6px;left:60.0px">[<span class="s">"2022-08-11<span class="i">·</span>16:34:24"</span>,<span class="i">·</span><span class="s">"192.168.19.1:62995"</span>,<span class="i">·</span><span class="s">"POST"</span>,<span class="i">·</span><span class="s">"/config?action=get_config"</span>,<span class="i">·</span><span class="s">"Mozilla/5.0<span class="i">·</span>(Windows<span class="i">·</span>NT<span class="i">·</span>10.0;<span class="i">·</span>WOW64)<span class="i">·</span>AppleWebKit/537.36<span class="i">·</span>(KHTML,<span class="i">·</span>like<span class="i">·</span></span></div><div class="row" style="top:11px;left:90.8px"><span class="s">Gecko)<span class="i">·</span>Chrome/86.0.4240.198<span class="i">·</span>Safari/537.36"</span>,<span class="i">·</span><span class="s">"{}"</span>,<span class="i">·</span><span class="n">2</span>]<span class="i">¬</span></div><div class="ln" style="top:28px">84</div><div class="row" style="top:28px;left:60.0px">[<span class="s">"2022-08-11<span class="i">·</span>16:34:24"</span>,<span class="i">·</span><span class="s">"192.168.19.1:60725"</span>,<span class="i">·</span><span class="s">"POST"</span>,<span class="i">·</span><span class="s">"/files?action=GetDir"</span>,<span class="i">·</span><span class="s">"Mozilla/5.0<span class="i">·</span>(Windows<span class="i">·</span>NT<span class="i">·</span>10.0;<span class="i">·</span>WOW64)<span class="i">·</span>AppleWebKit/537.36<span class="i">·</span>(KHTML,<span class="i">·</span>like<span class="i">·</span>Gecko)<span class="i">·</span></span></div><div class="row" style="top:45px;left:90.8px"><span class="s">Chrome/86.0.4240.198<span class="i">·</span>Safari/537.36"</span>,<span class="i">·</span><span class="s">"{'p':<span class="i">·</span>'1',<span class="i">·</span>'showRow':<span class="i">·</span>'100',<span class="i">·</span>'path':<span class="i">·</span>'/www/wwwlogs',<span class="i">·</span>'is_operating':<span class="i">·</span>'true',<span class="i">·</span>'search':<span class="i">·</span>''}"</span>,<span class="i">·</span><span class="n">4</span>]<span class="i">¬</span></div><div class="ln" style="top:62px">85</div><div class="row" style="top:62px;left:60.0px">[<span class="s">"2022-08-11<span class="i">·</span>16:34:36"</span>,<span class="i">·</span><span class="s">"192.168.19.1:60725"</span>,<span class="i">·</span><span class="s">"POST"</span>,<span class="i">·</span><span class="s">"/files?action=GetDir"</span>,<span class="i">·</span><span class="s">"Mozilla/5.0<span class="i">·</span>(Windows<span class="i">·</span>NT<span class="i">·</span>10.0;<span class="i">·</span>WOW64)<span class="i">·</span>AppleWebKit/537.36<span class="i">·</span>(KHTML,<span class="i">·</span>like<span class="i">·</span>Gecko)<span class="i">·</span></span></div><div class="row" style="top:79px;left:90.8px"><span class="s">Chrome/86.0.4240.198<span class="i">·</span>Safari/537.36"</span>,<span class="i">·</span><span class="s">"{'p':<span class="i">·</span>'1',<span class="i">·</span>'showRow':<span class="i">·</span>'100',<span class="i">·</span>'path':<span class="i">·</span>'/www',<span class="i">·</span>'is_operating':<span class="i">·</span>'true',<span class="i">·</span>'search':<span class="i">·</span>''}"</span>,<span class="i">·</span><span class="n">7</span>]<span class="i">¬</span></div><div class="ln" style="top:96px">86</div><div class="row" style="top:96px;left:60.0px">[<span class="s">"2022-08-11<span class="i">·</span>16:34:38"</span>,<span class="i">·</span><span class="s">"192.168.19.1:60725"</span>,<span class="i">·</span><span class="s">"POST"</span>,<span class="i">·</span><span class="s">"/files?action=GetDir"</span>,<span class="i">·</span><span class="s">"Mozilla/5.0<span class="i">·</span>(Windows<span class="i">·</span>NT<span class="i">·</span>10.0;<span class="i">·</span>WOW64)<span class="i">·</span>AppleWebKit/537.36<span class="i">·</span>(KHTML,<span class="i">·</span>like<span class="i">·</span>Gecko)<span class="i">·</span></span></div><div class="row" style="top:113px;left:90.8px"><span class="s">Chrome/86.0.4240.198<span class="i">·</span>Safari/537.36"</span>,<span class="i">·</span><span class="s">"{'p':<span class="i">·</span>'1',<span class="i">·</span>'showRow':<span class="i">·</span>'100',<span class="i">·</span>'path':<span class="i">·</span>'/www/server',<span class="i">·</span>'is_operating':<span class="i">·</span>'true',<span class="i">·</span>'search':<span class="i">·</span>''}"</span>,<span class="i">·</span><span class="n">11</span>]<span class="i">¬</span></div><div class="ln" style="top:130px">87</div><div class="row" style="top:130px;left:60.0px">[<span class="s">"2022-08-11<span class="i">·</span>16:34:39"</span>,<span class="i">·</span><span class="s">"192.168.19.1:60725"</span>,<span class="i">·</span><span class="s">"POST"</span>,<span class="i">·</span><span class="s">"/files?action=GetDir"</span>,<span class="i">·</span><span class="s">"Mozilla/5.0<span class="i">·</span>(Windows<span class="i">·</span>NT<span class="i">·</span>10.0;<span class="i">·</span>WOW64)<span class="i">·</span>AppleWebKit/537.36<span class="i">·</span>(KHTML,<span class="i">·</span>like<span class="i">·</span>Gecko)<span class="i">·</span></span></div><div class="row" style="top:147px;left:90.8px"><span class="s">Chrome/86.0.4240.198<span class="i">·</span>Safari/537.36"</span>,<span class="i">·</span><span class="s">"{'p':<span class="i">·</span>'1',<span class="i">·</span>'showRow':<span class="i">·</span>'100',<span class="i">·</span>'path':<span class="i">·</span>'/www/server/panel',<span class="i">·</span>'is_operating':<span class="i">·</span>'true',<span class="i">·</span>'search':<span class="i">·</span>''}"</span>,<span class="i">·</span><span class="n">21</span>]<span class="i">¬</span></div><div class="ln" style="top:164px">88</div><div class="row" style="top:164px;left:60.0px">[<span class="s">"2022-08-11<span class="i">·</span>16:34:49"</span>,<span class="i">·</span><span class="s">"192.168.19.1:60725"</span>,<span class="i">·</span><span class="s">"POST"</span>,<span class="i">·</span><span class="s">"/files?action=GetDir"</span>,<span class="i">·</span><span class="s">"Mozilla/5.0<span class="i">·</span>(Windows<span class="i">·</span>NT<span class="i">·</span>10.0;<span class="i">·</span>WOW64)<span class="i">·</span>AppleWebKit/537.36<span class="i">·</span>(KHTML,<span class="i">·</span>like<span class="i">·</span>Gecko)<span class="i">·</span></span></div><div class="row" style="top:181px;left:90.8px"><span class="s">Chrome/86.0.4240.198<span class="i">·</span>Safari/537.36"</span>,<span class="i">·</span><span class="s">"{'p':<span class="i">·</span>'1',<span class="i">·</span>'showRow':<span class="i">·</span>'100',<span class="i">·</span>'path':<span class="i">·</span>'/www/server/panel/logs',<span class="i">·</span>'is_operating':<span class="i">·</span>'true',<span class="i">·</span>'search':<span class="i">·</span>''}"</span>,<span class="i">·</span><span class="n">7</span>]<span class="i">¬</span></div><div class="ln" style="top:198px">89</div><div class="row" style="top:198px;left:60.0px">[<span class="s">"2022-08-11<span class="i">·</span>16:34:51"</span>,<span class="i">·</span><span class="s">"192.168.19.1:60725"</span>,<span class="i">·</span><span class="s">"POST"</span>,<span class="i">·</span><span class="s">"/files?action=GetDir"</span>,<span class="i">·</span><span class="s">"Mozilla/5.0<span class="i">·</span>(Windows<span class="i">·</span>NT<span class="i">·</span>10.0;<span class="i">·</span>WOW64)<span class="i">·</span>AppleWebKit/537.36<span class="i">·</span>(KHTML,<span class="i">·</span>like<span class="i">·</span>Gecko)<span class="i">·</span></span></div><div class="row" style="top:215px;left:90.8px"><span class="s">Chrome/86.0.4240.198<span class="i">·</span>Safari/537.36"</span>,<span class="i">·</span><span class="s">"{'p':<span class="i">·</span>'1',<span class="i">·</span>'showRow':<span class="i">·</span>'100',<span class="i">·</span>'path':<span class="i">·</span>'/www/server/panel',<span class="i">·</span>'is_operating':<span class="i">·</span>'true',<span class="i">·</span>'search':<span class="i">·</span>''}"</span>,<span class="i">·</span><span class="n">20</span>]<span class="i">¬</span></div><div class="ln" style="top:232px">90</div><div class="row" style="top:232px;left:60.0px">[<span class="s">"2022-08-11<span class="i">·</span>16:35:17"</span>,<span class="i">·</span><span class="s">"192.168.19.1:62995"</span>,<span class="i">·</span><span class="s">"POST"</span>,<span class="i">·</span><span class="s">"/files?action=GetDir"</span>,<span class="i">·</span><span class="s">"Mozilla/5.0<span class="i">·</span>(Windows<span class="i">·</span>NT<span class="i">·</span>10.0;<span class="i">·</span>WOW64)<span class="i">·</span>AppleWebKit/537.36<span class="i">·</span>(KHTML,<span class="i">·</span>like<span class="i">·</span>Gecko)<span class="i">·</span></span></div><div class="row" style="top:249px;left:90.8px"><span class="s">Chrome/86.0.4240.198<span class="i">·</span>Safari/537.36"</span>,<span class="i">·</span><span class="s">"{'p':<span class="i">·</span>'1',<span class="i">·</span>'showRow':<span class="i">·</span>'100',<span class="i">·</span>'path':<span class="i">·</span>'/www/server/panel/logs',<span class="i">·</span>'is_operating':<span class="i">·</span>'true',<span class="i">·</span>'search':<span class="i">·</span>''}"</span>,<span class="i">·</span><span class="n">7</span>]<span class="i">¬</span></div><div class="ln" style="top:266px">91</div><div class="row" style="top:266px;left:60.0px">[<span class="s">"2022-08-11<span class="i">·</span>16:35:18"</span>,<span class="i">·</span><span class="s">"192.168.19.1:62995"</span>,<span class="i">·</span><span class="s">"POST"</span>,<span class="i">·</span><span class="s">"/files?action=GetDir"</span>,<span class="i">·</span><span class="s">"Mozilla/5.0<span class="i">·</span>(Windows<span class="i">·</span>NT<span class="i">·</span>10.0;<span class="i">·</span>WOW64)<span class="i">·</span>AppleWebKit/537.36<span class="i">·</span>(KHTML,<span class="i">·</span>like<span class="i">·</span>Gecko)<span class="i">·</span></span></div><div class="a" style="left:675.8px;top:282px;width:230.9px;height:17px;background:#49483e"></div><div class="row" style="top:283px;left:90.8px"><span class="s">Chrome/86.0.4240.198<span class="i">·</span>Safari/537.36"</span>,<span class="i">·</span><span class="s">"{'p':<span class="i">·</span>'1',<span class="i">·</span>'showRow':<span class="i">·</span>'100',<span class="i">·</span>'path':<span class="i">·</span>'/www/server/panel/logs/request',<span class="i">·</span>'is_operating':<span class="i">·</span>'true',<span class="i">·</span>'search':<span class="i">·</span>''}"</span>,<span class="i">·</span></div><div class="row" style="top:300px;left:90.8px"><span class="n">9</span>]<span class="i">¬</span></div><div class="ln" style="top:317px">92</div><div class="row" style="top:317px;left:60.0px">[<span class="s">"2022-08-11<span class="i">·</span>16:35:40"</span>,<span class="i">·</span><span class="s">"192.168.19.1:62995"</span>,<span class="i">·</span><span class="s">"POST"</span>,<span class="i">·</span><span class="s">"/files?action=GetDir"</span>,<span class="i">·</span><span class="s">"Mozilla/5.0<span class="i">·</span>(Windows<span class="i">·</span>NT<span class="i">·</span>10.0;<span class="i">·</span>WOW64)<span class="i">·</span>AppleWebKit/537.36<span class="i">·</span>(KHTML,<span class="i">·</span>like<span class="i">·</span>Gecko)<span class="i">·</span></span></div><div class="a" style="left:675.8px;top:333px;width:230.9px;height:17px;border:1px solid #49483e;border-radius:2px"></div><div class="row" style="top:334px;left:90.8px"><span class="s">Chrome/86.0.4240.198<span class="i">·</span>Safari/537.36"</span>,<span class="i">·</span><span class="s">"{'p':<span class="i">·</span>'1',<span class="i">·</span>'showRow':<span class="i">·</span>'100',<span class="i">·</span>'path':<span class="i">·</span>'/www/server/panel/logs/request/tips',<span class="i">·</span>'is_operating':<span class="i">·</span>'true',<span class="i">·</span>'search':<span class="i">·</span></span></div><div class="row" style="top:351px;left:90.8px"><span class="s">''}"</span>,<span class="i">·</span><span class="n">7</span>]<span class="i">¬</span></div><div class="ln" style="top:368px">93</div><div class="row" style="top:368px;left:60.0px">[<span class="s">"2022-08-11<span class="i">·</span>16:35:41"</span>,<span class="i">·</span><span class="s">"192.168.19.1:62995"</span>,<span class="i">·</span><span class="s">"POST"</span>,<span class="i">·</span><span class="s">"/files?action=GetDir"</span>,<span class="i">·</span><span class="s">"Mozilla/5.0<span class="i">·</span>(Windows<span class="i">·</span>NT<span class="i">·</span>10.0;<span class="i">·</span>WOW64)<span class="i">·</span>AppleWebKit/537.36<span class="i">·</span>(KHTML,<span class="i">·</span>like<span class="i">·</span>Gecko)<span class="i">·</span></span></div><div class="a" style="left:675.8px;top:384px;width:230.9px;height:17px;border:1px solid #49483e;border-radius:2px"></div><div class="row" style="top:385px;left:90.8px"><span class="s">Chrome/86.0.4240.198<span class="i">·</span>Safari/537.36"</span>,<span class="i">·</span><span class="s">"{'p':<span class="i">·</span>'1',<span class="i">·</span>'showRow':<span class="i">·</span>'100',<span class="i">·</span>'path':<span class="i">·</span>'/www/server/panel/logs/request',<span class="i">·</span>'is_operating':<span class="i">·</span>'true',<span class="i">·</span>'search':<span class="i">·</span>''}"</span>,<span class="i">·</span></div><div class="row" style="top:402px;left:90.8px"><span class="n">10</span>]<span class="i">¬</span></div><div class="ln" style="top:419px">94</div><div class="row" style="top:419px;left:60.0px">[<span class="s">"2022-08-11<span class="i">·</span>16:35:53"</span>,<span class="i">·</span><span class="s">"192.168.19.1:62995"</span>,<span class="i">·</span><span class="s">"POST"</span>,<span class="i">·</span><span class="s">"/files?action=get_file_attribute"</span>,<span class="i">·</span><span class="s">"Mozilla/5.0<span class="i">·</span>(Windows<span class="i">·</span>NT<span class="i">·</span>10.0;<span class="i">·</span>WOW64)<span class="i">·</span>AppleWebKit/537.36<span class="i">·</span>(KHTML,<span class="i">·</span></span></div><div class="a" style="left:583.5px;top:435px;width:230.9px;height:17px;border:1px solid #49483e;border-radius:2px"></div><div class="row" style="top:436px;left:90.8px"><span class="s">like<span class="i">·</span>Gecko)<span class="i">·</span>Chrome/86.0.4240.198<span class="i">·</span>Safari/537.36"</span>,<span class="i">·</span><span class="s">"{'filename':<span class="i">·</span>'/www/server/panel/logs/request/2022-07-22.json.gz'}"</span>,<span class="i">·</span><span class="n">58</span>]<span class="i">¬</span></div><div class="ln" style="top:453px">95</div><div class="row" style="top:453px;left:60.0px">[<span class="s">"2022-08-11<span class="i">·</span>16:36:09"</span>,<span class="i">·</span><span class="s">"192.168.19.1:62995"</span>,<span class="i">·</span><span class="s">"POST"</span>,<span class="i">·</span><span class="s">"/files?action=GetFileBody"</span>,<span class="i">·</span><span class="s">"Mozilla/5.0<span class="i">·</span>(Windows<span class="i">·</span>NT<span class="i">·</span>10.0;<span class="i">·</span>WOW64)<span class="i">·</span>AppleWebKit/537.36<span class="i">·</span>(KHTML,<span class="i">·</span>like<span class="i">·</span></span></div><div class="row" style="top:470px;left:90.8px"><span class="s">Gecko)<span class="i">·</span>Chrome/86.0.4240.198<span class="i">·</span>Safari/537.36"</span>,<span class="i">·</span><span class="s">"{'path':<span class="i">·</span>'/www/server/panel/BTPanel/static/editor/ace.editor.config.json'}"</span>,<span class="i">·</span><span class="n">36</span>]<span class="i">¬</span></div><div class="ln" style="top:487px">96</div><div class="row" style="top:487px;left:60.0px">[<span class="s">"2022-08-11<span class="i">·</span>16:36:09"</span>,<span class="i">·</span><span class="s">"192.168.19.1:62995"</span>,<span class="i">·</span><span class="s">"POST"</span>,<span class="i">·</span><span class="s">"/files?action=GetDir&amp;tojs=GetFiles"</span>,<span class="i">·</span><span class="s">"Mozilla/5.0<span class="i">·</span>(Windows<span class="i">·</span>NT<span class="i">·</span>10.0;<span class="i">·</span>WOW64)<span class="i">·</span>AppleWebKit/537.36<span class="i">·</span></span></div><div class="a" style="left:1106.9px;top:503px;width:1px;height:17px;background:#55544a"></div><div class="row" style="top:504px;left:90.8px"><span class="s">(KHTML,<span class="i">·</span>like<span class="i">·</span>Gecko)<span class="i">·</span>Chrome/86.0.4240.198<span class="i">·</span>Safari/537.36"</span>,<span class="i">·</span><span class="s">"{'p':<span class="i">·</span>'1',<span class="i">·</span>'showRow':<span class="i">·</span>'200',<span class="i">·</span>'sort':<span class="i">·</span>'name',<span class="i">·</span>'reverse':<span class="i">·</span>'False',<span class="i">·</span>'path':<span class="i">·</span>'/www/server/panel</span></div><div class="row" style="top:521px;left:90.8px"><span class="s">/logs/request',<span class="i">·</span>'search':<span class="i">·</span>''}"</span>,<span class="i">·</span><span class="n">16</span>]<span class="i">¬</span></div><div class="ln" style="top:538px">97</div><div class="row" style="top:538px;left:60.0px">[<span class="s">"2022-08-11<span class="i">·</span>16:36:09"</span>,<span class="i">·</span><span class="s">"192.168.19.1:60725"</span>,<span class="i">·</span><span class="s">"POST"</span>,<span class="i">·</span><span class="s">"/files?action=GetFileBody"</span>,<span class="i">·</span><span class="s">"Mozilla/5.0<span class="i">·</span>(Windows<span class="i">·</span>NT<span class="i">·</span>10.0;<span class="i">·</span>WOW64)<span class="i">·</span>AppleWebKit/537.36<span class="i">·</span>(KHTML,<span class="i">·</span>like<span class="i">·</span></span></div><div class="a" style="left:514.2px;top:554px;width:230.9px;height:17px;border:1px solid #49483e;border-radius:2px"></div><div class="row" style="top:555px;left:90.8px"><span class="s">Gecko)<span class="i">·</span>Chrome/86.0.4240.198<span class="i">·</span>Safari/537.36"</span>,<span class="i">·</span><span class="s">"{'path':<span class="i">·</span>'/www/server/panel/logs/request/2022-08-11.json'}"</span>,<span class="i">·</span><span class="n">1</span>]<span class="i">¬</span></div><div class="ln" style="top:572px">98</div><div class="row" style="top:572px;left:60.0px">[<span class="s">"2022-08-11<span class="i">·</span>16:37:31"</span>,<span class="i">·</span><span class="s">"192.168.19.1:62997"</span>,<span class="i">·</span><span class="s">"POST"</span>,<span class="i">·</span><span class="s">"/files?action=GetDir&amp;tojs=GetFiles"</span>,<span class="i">·</span><span class="s">"Mozilla/5.0<span class="i">·</span>(Windows<span class="i">·</span>NT<span class="i">·</span>10.0;<span class="i">·</span>WOW64)<span class="i">·</span>AppleWebKit/537.36<span class="i">·</span></span></div><div class="a" style="left:1106.9px;top:588px;width:1px;height:17px;background:#55544a"></div><div class="row" style="top:589px;left:90.8px"><span class="s">(KHTML,<span class="i">·</span>like<span class="i">·</span>Gecko)<span class="i">·</span>Chrome/86.0.4240.198<span class="i">·</span>Safari/537.36"</span>,<span class="i">·</span><span class="s">"{'p':<span class="i">·</span>'1',<span class="i">·</span>'showRow':<span class="i">·</span>'200',<span class="i">·</span>'sort':<span class="i">·</span>'name',<span class="i">·</span>'reverse':<span class="i">·</span>'False',<span class="i">·</span>'path':<span class="i">·</span>'/www/server/panel</span></div><div class="row" style="top:606px;left:90.8px"><span class="s">/logs/request',<span class="i">·</span>'search':<span class="i">·</span>''}"</span>,<span class="i">·</span><span class="n">10</span>]<span class="i">¬</span></div><div class="ln" style="top:623px">99</div><div class="row" style="top:623px;left:60.0px">[<span class="s">"2022-08-11<span class="i">·</span>16:37:31"</span>,<span class="i">·</span><span class="s">"192.168.19.1:62997"</span>,<span class="i">·</span><span class="s">"POST"</span>,<span class="i">·</span><span class="s">"/files?action=GetDir&amp;tojs=GetFiles"</span>,<span class="i">·</span><span class="s">"Mozilla/5.0<span class="i">·</span>(Windows<span class="i">·</span>NT<span class="i">·</span>10.0;<span class="i">·</span>WOW64)<span class="i">·</span>AppleWebKit/537.36<span class="i">·</span></span></div><div class="row" style="top:640px;left:90.8px"><span class="s">(KHTML,<span class="i">·</span>like<span class="i">·</span>Gecko)<span class="i">·</span>Chrome/86.0.4240.198<span class="i">·</span>Safari/537.36"</span>,<span class="i">·</span><span class="s">"{}"</span>,<span class="i">·</span><span class="n">1</span>]<span class="i">¬</span></div><div class="a" style="left:1250px;top:0;width:15px;height:603px;background:#333"></div><div class="a" style="left:1250px;top:316px;width:15px;height:66px;background:#777"></div><div class="a" style="left:57px;top:603px;width:1193px;height:10px;background:#333"></div><div class="a" style="left:56px;top:603px;width:1141px;height:10px;background:#777"></div><div class="a" style="left:1250px;top:603px;width:15px;height:10px;background:#2a2a2a"></div><div class="a" style="left:875px;top:0;width:375px;height:58px;background:#ddd;border-radius:0 0 0 5px;box-shadow:0 0 3px rgba(0,0,0,.35)"></div><div class="a" style="left:881px;top:5px;width:342px;height:27px;background:#fff;border-radius:3px;border:1px solid #cfcfcf"></div><div class="a" style="left:1131px;top:5px;width:1px;height:27px;background:#e4e4e4"></div><div class="a" style="left:1160px;top:5px;width:1px;height:27px;background:#e4e4e4"></div><div class="a" style="left:1187px;top:5px;width:1px;height:27px;background:#e4e4e4"></div><div class="a" style="left:888px;top:10px;font-family:'Liberation Mono',monospace;font-size:12.83px;line-height:17px;color:#000;white-space:pre">/www/server/panel/logs/request</div><div class="a" style="left:1118px;top:10px;width:1px;height:17px;background:#000"></div><svg class="a" style="left:1141px;top:13px" width="7" height="11" viewBox="0 0 7 11"><path d="M6 1L1.5 5.5L6 10" fill="none" stroke="#555" stroke-width="1.3"/></svg><svg class="a" style="left:1170px;top:13px" width="7" height="11" viewBox="0 0 7 11"><path d="M1 1L5.5 5.5L1 10" fill="none" stroke="#555" stroke-width="1.3"/></svg><div class="a" style="left:1193px;top:10px;font-family:'Liberation Mono',monospace;font-size:12.83px;line-height:17px;color:#777">All</div><svg class="a" style="left:1232px;top:12px" width="9" height="9" viewBox="0 0 9 9"><path d="M1 1L8 8M8 1L1 8" stroke="#555" stroke-width="1.8"/></svg><div class="a" style="left:882px;top:36px;width:20px;height:19px;border:1px solid #ccc;font-size:14px;line-height:17px;text-align:center;color:#444">+</div><div class="a" style="left:911px;top:37px;font-size:13px;line-height:16px;color:#777">1 of 35</div><div class="a" style="left:1168px;top:36px;width:20px;height:20px;border:1px solid #ccc;font-family:'Liberation Mono',monospace;font-size:12px;line-height:18px;text-align:center;color:#555">.*</div><div class="a" style="left:1190px;top:36px;width:20px;height:20px;border:1px solid #ccc;font-family:'Liberation Mono',monospace;font-size:12px;line-height:18px;text-align:center;color:#555">Aa</div><div class="a" style="left:1211px;top:36px;width:19px;height:20px;border:1px solid #ccc;font-family:'Liberation Mono',monospace;font-size:12px;line-height:18px;text-align:center;color:#555">\b</div><div class="a" style="left:1232px;top:36px;width:13px;height:20px;border:1px solid #ccc;font-family:'Liberation Mono',monospace;font-size:12px;line-height:18px;text-align:center;color:#555">S</div></div><div class="a" style="left:264px;top:346px;width:14px;height:50px;border:1px solid #5a5a5a;border-radius:0 13px 13px 0;background:#222;border-left:none"></div><svg class="a" style="left:265px;top:364px" width="8" height="12" viewBox="0 0 8 12"><path d="M6.5 1.5L2 6L6.5 10.5" fill="none" stroke="#e6e6e6" stroke-width="1.8"/></svg><div class="a" id="status"><span class="a" style="left:15px">文件位置<span style="margin-left:1px;margin-right:4px">:</span>/www/server/panel/logs/request/2022-08-11.json</span><span class="a" style="left:775px">行 91 ,列 261</span><div class="a" style="left:872px;top:0;width:1px;height:26px;background:#555"></div><span class="a" style="left:887px">历史版本<span style="margin-left:1px;margin-right:4px">:</span>无</span><div class="a" style="left:975px;top:0;width:1px;height:26px;background:#555"></div><span class="a" style="left:991px">空格<span style="margin-left:1px;margin-right:4px">:</span>4</span><div class="a" style="left:1049px;top:0;width:1px;height:26px;background:#555"></div><span class="a" style="left:1064px">编码<span style="margin-left:1px;margin-right:4px">:</span>UTF-8</span><div class="a" style="left:1150px;top:0;width:1px;height:26px;background:#555"></div><span class="a" style="left:1166px">语言<span style="margin-left:1px;margin-right:4px">:</span>JSON</span><div class="a" style="left:1249px;top:0;width:1px;height:26px;background:#555"></div></div></div><div class="a" style="left:0;top:0;width:1912px;height:932px;border-radius:8px;box-shadow:0 0 0 40px #c3dfe3"></div></body></html>
